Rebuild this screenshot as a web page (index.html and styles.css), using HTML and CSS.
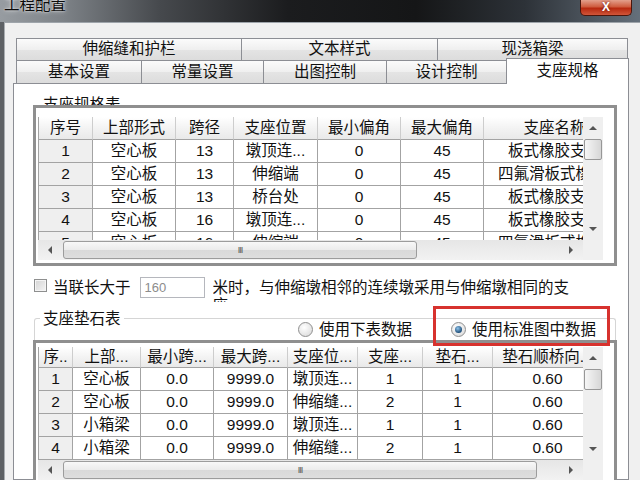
FILE: index.html
```html
<!DOCTYPE html>
<html lang="zh-CN">
<head>
    <meta charset="UTF-8">
    <meta name="viewport" content="width=device-width, initial-scale=1.0">
    <title>工程配置</title>
    <link rel="stylesheet" href="styles.css">
</head>
<body>
<div class="window">
    <div class="titlebar">
        <span class="title">工程配置</span>
        <span class="close">X</span>
    </div>
    <div class="client">
        <div class="tabrow row1">
            <div class="tab tw1">伸缩缝和护栏</div>
            <div class="tab tw2">文本样式</div>
            <div class="tab tw3">现浇箱梁</div>
        </div>
        <div class="tabrow row2">
            <div class="tab tw4">基本设置</div>
            <div class="tab tw5">常量设置</div>
            <div class="tab tw6">出图控制</div>
            <div class="tab tw7">设计控制</div>
            <div class="tab tw5 active">支座规格</div>
        </div>

        <div class="panel">
            <div class="box-title">支座规格表</div>
            <div class="gridbox">
                <div class="grid upper">
                    <div class="cells">
                        <table class="t1">
                            <colgroup>
                                <col class="w54"><col class="w83"><col class="w58"><col class="w84">
                                <col class="w83"><col class="w83"><col class="w142">
                            </colgroup>
                            <tr><th>序号</th><th>上部形式</th><th>跨径</th><th>支座位置</th><th>最小偏角</th><th>最大偏角</th><th>支座名称</th></tr>
                            <tr><td class="no">1</td><td>空心板</td><td>13</td><td>墩顶连...</td><td>0</td><td>45</td><td>板式橡胶支座</td></tr>
                            <tr><td class="no">2</td><td>空心板</td><td>13</td><td>伸缩端</td><td>0</td><td>45</td><td class="long">四氟滑板式橡胶支座</td></tr>
                            <tr><td class="no">3</td><td>空心板</td><td>13</td><td>桥台处</td><td>0</td><td>45</td><td>板式橡胶支座</td></tr>
                            <tr><td class="no">4</td><td>空心板</td><td>16</td><td>墩顶连...</td><td>0</td><td>45</td><td>板式橡胶支座</td></tr>
                            <tr><td class="no">5</td><td>空心板</td><td>16</td><td>伸缩端</td><td>0</td><td>45</td><td class="long">四氟滑板式橡胶支座</td></tr>
                        </table>
                    </div>
                    <div class="vscroll">
                        <div class="vbtn"><span class="arr up"></span></div>
                        <div class="vthumb"></div>
                        <div class="spacer"></div>
                        <div class="vbtn"><span class="arr down"></span></div>
                    </div>
                    <div class="hscroll">
                        <div class="hbtn"><span class="arr left"></span></div>
                        <div class="hthumb">III</div>
                        <div class="spacer"></div>
                        <div class="hbtn"><span class="arr right"></span></div>
                    </div>
                    <div class="corner"></div>
                </div>
            </div>

            <div class="checkline">
                <span class="check"></span>
                <span class="check-label">当联长大于</span>
                <input class="len-input" type="text" value="160">
                <span class="long-label">米时，与伸缩墩相邻的连续墩采用与伸缩墩相同的支座</span>
            </div>

            <div class="group">
                <div class="group-head">
                    <span class="group-title">支座垫石表</span>
                    <div class="radios">
                        <label class="radio"><span class="dot"></span>使用下表数据</label>
                        <label class="radio marked"><span class="dot on"></span>使用标准图中数据</label>
                    </div>
                </div>
            </div>

            <div class="gridbox lower">
                <div class="grid">
                    <div class="cells">
                        <table class="t2">
                            <colgroup>
                                <col class="w34"><col class="w68"><col class="w73"><col class="w74">
                                <col class="w70"><col class="w65"><col class="w70"><col class="w110">
                            </colgroup>
                            <tr><th>序..</th><th>上部...</th><th>最小跨...</th><th>最大跨...</th><th>支座位...</th><th>支座...</th><th>垫石...</th><th>垫石顺桥向...</th></tr>
                            <tr><td class="no">1</td><td>空心板</td><td>0.0</td><td>9999.0</td><td>墩顶连...</td><td>1</td><td>1</td><td>0.60</td></tr>
                            <tr><td class="no">2</td><td>空心板</td><td>0.0</td><td>9999.0</td><td>伸缩缝...</td><td>2</td><td>1</td><td>0.60</td></tr>
                            <tr><td class="no">3</td><td>小箱梁</td><td>0.0</td><td>9999.0</td><td>墩顶连...</td><td>1</td><td>1</td><td>0.60</td></tr>
                            <tr><td class="no">4</td><td>小箱梁</td><td>0.0</td><td>9999.0</td><td>伸缩缝...</td><td>2</td><td>1</td><td>0.60</td></tr>
                        </table>
                    </div>
                    <div class="vscroll">
                        <div class="vbtn"><span class="arr up"></span></div>
                        <div class="vthumb"></div>
                        <div class="spacer"></div>
                        <div class="vbtn"><span class="arr down"></span></div>
                    </div>
                    <div class="hscroll">
                        <div class="hbtn"><span class="arr left"></span></div>
                        <div class="hthumb wide">III</div>
                        <div class="spacer"></div>
                        <div class="hbtn"><span class="arr right"></span></div>
                    </div>
                    <div class="corner"></div>
                </div>
            </div>
        </div>
    </div>
</div>
</body>
</html>
```

FILE: styles.css
```css
body {
    margin: 0;
    font-family: "Liberation Sans", "Noto Sans CJK SC", sans-serif;
    font-size: 15.5px;
    color: #111;
    background: #5e6165;
    overflow: hidden;
}

.window {
    width: 640px;
    height: 480px;
    display: flex;
    flex-direction: column;
    overflow: hidden;
}

/* title bar */
.titlebar {
    height: 22px;
    flex: none;
    display: flex;
    justify-content: space-between;
    align-items: flex-start;
    background: linear-gradient(90deg, #979ca1 0%, #7d8287 10%, #46494d 25%, #1b1c1e 45%, #151617 65%, #2d3238 82%, #65707b 100%);
    overflow: hidden;
}

.title {
    margin: -3px 0 0 4px;
    line-height: 16px;
    color: #0c0c0c;
    text-shadow: 0 0 5px rgba(255, 255, 255, 0.7), 0 0 2px rgba(255, 255, 255, 0.8);
}

.close {
    width: 52px;
    height: 16px;
    margin-right: 8px;
    box-sizing: border-box;
    border: 1px solid #4b160c;
    border-top: none;
    border-radius: 0 0 5px 5px;
    background: linear-gradient(#e3a08c, #cf5c3f 45%, #b8290f 55%, #d0563a);
    color: #fff;
    font: bold 12px "Liberation Sans", sans-serif;
    line-height: 15px;
    text-align: center;
    text-shadow: 0 0 3px #6b1a0a;
}

.client {
    flex: 1;
    min-height: 0;
    display: flex;
    flex-direction: column;
    margin-left: 4px;
    padding: 15px 11px 0 8px;
    border-top: 1px solid #9ea4aa;
    border-left: 1px solid #a9adb1;
    background: #f0f0f0;
}

/* tabs */
.tabrow {
    display: flex;
    align-items: flex-start;
    margin-left: 3px;
}

.tab {
    box-sizing: border-box;
    height: 22px;
    margin-right: -1px;
    border: 1px solid #8c8e94;
    border-bottom: none;
    background: linear-gradient(#fbfbfb, #efefef 50%, #e4e4e4 51%, #dcdcdc);
    text-align: center;
    line-height: 20px;
    white-space: nowrap;
}

.row2 .tab {
    height: 23px;
    line-height: 22px;
}

.row2 .tab.active {
    position: relative;
    height: 26px;
    margin-top: -2px;
    margin-bottom: -1px;
    background: #fff;
    line-height: 23px;
}

.tw1 { width: 226px; }
.tw2 { width: 197px; }
.tw3 { width: 191px; }
.tw4 { width: 126px; }
.tw5 { width: 123px; }
.tw6 { width: 124px; }
.tw7 { width: 121px; }

.panel {
    flex: 1;
    min-height: 0;
    padding: 0 11px 0 19px;
    border: 1px solid #8c8e94;
    background: #fff;
}

.box-title {
    margin: 13px 0 0 10px;
    line-height: 16px;
}

/* grid boxes */
.gridbox {
    position: relative;
    margin-top: -8px;
    padding: 9px 11px 3px 2px;
    border: 3px solid #8f8f8f;
    background: #fff;
}

.gridbox.lower {
    margin-top: 0;
    padding-top: 4px;
}

.grid {
    display: grid;
    grid-template-columns: 545px 20px;
    grid-template-rows: 113px 20px;
}

.grid.upper {
    grid-template-rows: 123px 20px;
}

.cells {
    overflow: hidden;
}

.cells table {
    border-collapse: separate;
    border-spacing: 0;
    table-layout: fixed;
    border-left: 1px solid #a3a3a3;
}

.t1 { width: 588px; }
.t2 { width: 565px; }

.w34 { width: 34px; }
.w54 { width: 54px; }
.w58 { width: 58px; }
.w65 { width: 65px; }
.w68 { width: 68px; }
.w70 { width: 70px; }
.w73 { width: 73px; }
.w74 { width: 74px; }
.w83 { width: 83px; }
.w84 { width: 84px; }
.w110 { width: 110px; }
.w142 { width: 142px; }

th, td {
    padding: 0;
    overflow: hidden;
    white-space: nowrap;
    text-align: center;
    font-weight: normal;
    line-height: 22px;
    border-right: 1px solid #a3a3a3;
    border-bottom: 1px solid #a3a3a3;
}

th {
    background: linear-gradient(#ffffff, #f2f2f2 55%, #e9e9e9);
    border-right-color: #cdcdcd;
}

.t2 th {
    line-height: 20px;
}

td.no {
    background: #efefef;
}

td.long {
    text-align: left;
    padding-left: 14px;
}

/* scrollbars */
.vscroll {
    display: flex;
    flex-direction: column;
    align-items: center;
    background: #efefef;
}

.vbtn {
    height: 22px;
    display: flex;
    align-items: center;
    justify-content: center;
}

.vthumb {
    box-sizing: border-box;
    width: 18px;
    height: 21px;
    border: 1px solid #979797;
    border-radius: 2px;
    background: linear-gradient(90deg, #f6f6f6, #e6e6e6 50%, #d6d6d6);
}

.spacer {
    flex: 1;
}

.hscroll {
    display: flex;
    align-items: center;
    background: linear-gradient(#e6e6e6, #f2f2f2);
}

.hbtn {
    width: 24px;
    height: 20px;
    display: flex;
    align-items: center;
    justify-content: center;
}

.hthumb {
    box-sizing: border-box;
    width: 354px;
    height: 18px;
    margin-left: 1px;
    border: 1px solid #9c9c9c;
    border-radius: 3px;
    background: linear-gradient(#f8f8f8, #ebebeb 50%, #d9d9d9 51%, #dedede);
    display: flex;
    align-items: center;
    justify-content: center;
    font: 9px "Liberation Sans", sans-serif;
    letter-spacing: -1px;
    color: #555;
}

.hthumb.wide {
    width: 474px;
}

.corner {
    background: #f0f0f0;
}

.arr {
    width: 0;
    height: 0;
    border: 4px solid transparent;
}

.arr.up { border-bottom-color: #555; border-top-width: 0; }
.arr.down { border-top-color: #555; border-bottom-width: 0; }
.arr.left { border-right-color: #555; border-left-width: 0; }
.arr.right { border-left-color: #555; border-right-width: 0; }

/* checkbox line */
.checkline {
    display: flex;
    align-items: flex-start;
    height: 21px;
    margin-top: 11px;
}

.check {
    box-sizing: border-box;
    width: 13px;
    height: 13px;
    margin: 2px 0 0 1px;
    border: 1px solid #8e8f8f;
    background: linear-gradient(135deg, #d4d4d4, #f4f4f4);
    box-shadow: inset 0 0 0 1px #f4f4f4;
}

.check-label {
    margin: 2px 0 0 6px;
    line-height: 18px;
}

.len-input {
    box-sizing: border-box;
    width: 65px;
    height: 21px;
    margin: 0 0 0 9px;
    padding: 0 4px;
    border: 1px solid #b5b7bd;
    font: 13px "Liberation Sans", sans-serif;
    color: #8c8c8c;
    background: #fff;
}

.long-label {
    width: 362px;
    height: 23px;
    margin: 2px 0 0 8px;
    line-height: 18px;
    overflow: hidden;
}

/* group */
.group {
    margin: 20px 1px 0;
    padding: 0 19px 3px 0;
    border: 1px solid #d5d5d5;
    border-bottom: none;
    border-radius: 3px 3px 0 0;
}

.group-head {
    display: flex;
    align-items: flex-start;
    margin-top: -8px;
}

.group-title {
    margin-left: 5px;
    padding: 0 3px;
    line-height: 16px;
    background: #fff;
}

.radios {
    display: flex;
    gap: 39px;
    margin: 11px 0 0 auto;
}

.radio {
    position: relative;
    display: flex;
    align-items: center;
    gap: 6px;
    line-height: 15px;
}

.dot {
    box-sizing: border-box;
    width: 15px;
    height: 15px;
    border: 1px solid #8f8f8f;
    border-radius: 50%;
    background: radial-gradient(circle at 40% 35%, #ffffff, #d6d6d6);
    display: flex;
    align-items: center;
    justify-content: center;
}

.dot.on::before {
    content: "";
    width: 7px;
    height: 7px;
    border-radius: 50%;
    background: radial-gradient(circle at 40% 35%, #8fc3ea, #1f4f7a 70%);
}

.radio.marked::after {
    content: "";
    position: absolute;
    left: -18px;
    top: -16px;
    right: -14px;
    bottom: -9px;
    border: 3px solid #d7322e;
    z-index: 2;
}
```
